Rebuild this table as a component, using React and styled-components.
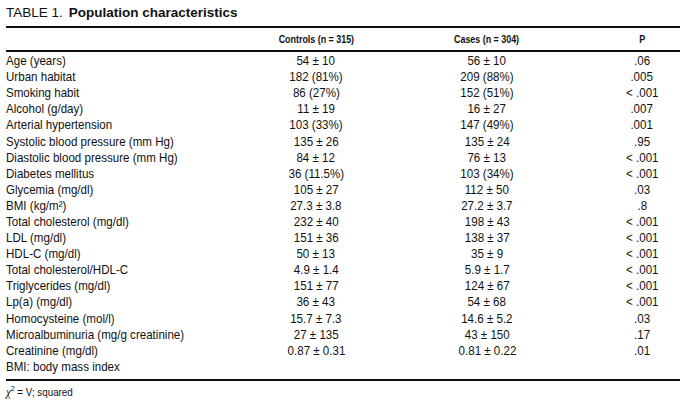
import React from 'react';
import styled, { createGlobalStyle } from 'styled-components';

const GlobalStyle = createGlobalStyle`
  html, body {
    margin: 0;
    padding: 0;
    background: #fff;
  }
  body {
    font-family: "Liberation Sans", Arial, sans-serif;
    color: #111;
  }
`;

const rows = [
  ['Age (years)', '54 ± 10', '56 ± 10', '.06'],
  ['Urban habitat', '182 (81%)', '209 (88%)', '.005'],
  ['Smoking habit', '86 (27%)', '152 (51%)', '< .001'],
  ['Alcohol (g/day)', '11 ± 19', '16 ± 27', '.007'],
  ['Arterial hypertension', '103 (33%)', '147 (49%)', '.001'],
  ['Systolic blood pressure (mm Hg)', '135 ± 26', '135 ± 24', '.95'],
  ['Diastolic blood pressure (mm Hg)', '84 ± 12', '76 ± 13', '< .001'],
  ['Diabetes mellitus', '36 (11.5%)', '103 (34%)', '< .001'],
  ['Glycemia (mg/dl)', '105 ± 27', '112 ± 50', '.03'],
  ['BMI (kg/m²)', '27.3 ± 3.8', '27.2 ± 3.7', '.8'],
  ['Total cholesterol (mg/dl)', '232 ± 40', '198 ± 43', '< .001'],
  ['LDL (mg/dl)', '151 ± 36', '138 ± 37', '< .001'],
  ['HDL-C (mg/dl)', '50 ± 13', '35 ± 9', '< .001'],
  ['Total cholesterol/HDL-C', '4.9 ± 1.4', '5.9 ± 1.7', '< .001'],
  ['Triglycerides (mg/dl)', '151 ± 77', '124 ± 67', '< .001'],
  ['Lp(a) (mg/dl)', '36 ± 43', '54 ± 68', '< .001'],
  ['Homocysteine (mol/l)', '15.7 ± 7.3', '14.6 ± 5.2', '.03'],
  ['Microalbuminuria (mg/g creatinine)', '27 ± 135', '43 ± 150', '.17'],
  ['Creatinine (mg/dl)', '0.87 ± 0.31', '0.81 ± 0.22', '.01'],
];

export default function App() {
  return (
    <Page>
      <GlobalStyle />
      <Title>
        TABLE 1.<Strong>Population characteristics</Strong>
      </Title>
      <Rule />
      <Grid head>
        <span />
        <HeadCell><Narrow center>Controls (n = 315)</Narrow></HeadCell>
        <HeadCell><Narrow center>Cases (n = 304)</Narrow></HeadCell>
        <HeadCell last><Narrow center>P</Narrow></HeadCell>
      </Grid>
      <Rule />
      <Body>
        {rows.map((r, i) => (
          <Grid key={i}>
            <Label><Narrow>{r[0]}</Narrow></Label>
            <Cell><Narrow center>{r[1]}</Narrow></Cell>
            <Cell><Narrow center>{r[2]}</Narrow></Cell>
            <Cell last><Narrow center>{r[3]}</Narrow></Cell>
          </Grid>
        ))}
        <Grid>
          <Label><Narrow>BMI: body mass index</Narrow></Label>
        </Grid>
      </Body>
      <Rule />
      <Foot>
        <Narrow>
          <Chi>χ</Chi><sup>2</sup> = V; squared
        </Narrow>
      </Foot>
    </Page>
  );
}

const Page = styled.div`
  width: 674px;
  height: 406px;
  padding-left: 6px;
  overflow: hidden;
`;

const Title = styled.div`
  font-size: 13.5px;
  line-height: 18px;
  padding-top: 4px;
  height: 21.5px;
  white-space: nowrap;
`;

const Strong = styled.b`
  margin-left: 6px;
`;

const Rule = styled.div`
  height: 2px;
  background: #111;
`;

const Grid = styled.div`
  display: grid;
  grid-template-columns: 240px 140px 202px 92px;
  align-items: center;
  height: ${p => (p.head ? '22.5px' : '16.1px')};
  white-space: nowrap;
`;

/* condensed look: the reference uses a narrow grotesque */
const Narrow = styled.span`
  display: inline-block;
  transform: scaleX(0.89);
  transform-origin: ${p => (p.center ? 'center' : 'left')};
`;

const HeadCell = styled.div`
  text-align: center;
  font-size: 10px;
  font-weight: bold;
  padding-left: ${p => (p.last ? '16px' : '0')};
  padding-top: 1px;
`;

const Body = styled.div`
  padding-top: 1px;
  padding-bottom: 4px;
`;

const Label = styled.div`
  font-size: 13px;
  line-height: 16px;
`;

const Cell = styled.div`
  font-size: 13px;
  line-height: 16px;
  text-align: center;
  padding-left: ${p => (p.last ? '16px' : '0')};
`;

const Foot = styled.div`
  font-size: 11px;
  line-height: 14px;
  padding-top: 4px;
  sup {
    font-size: 7.5px;
    line-height: 0;
  }
`;

const Chi = styled.span`
  font-family: "Liberation Serif", "DejaVu Serif", serif;
  font-style: italic;
  font-size: 12.5px;
`;
